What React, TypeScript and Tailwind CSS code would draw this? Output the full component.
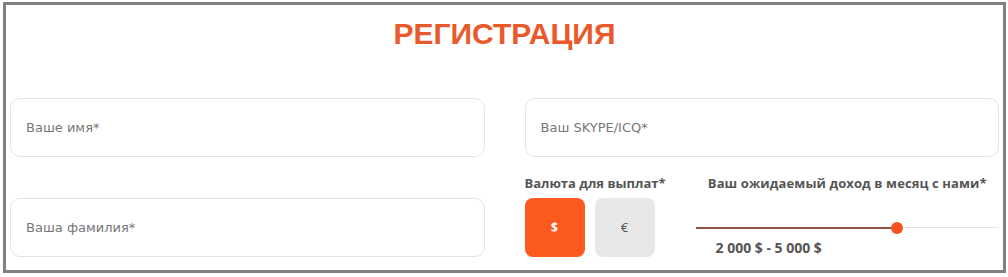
import React from 'react';

const inputCls =
  'w-full h-[59px] rounded-[10px] border border-[#e4e4e4] bg-white pl-[15px] text-[13px] text-[#555] outline-none placeholder:text-[#777] font-["DejaVu_Sans",sans-serif]';

const App = () => {
  const percent = 66.4;

  return (
    <div className="w-[1008px] h-[277px] bg-white pt-[2px] pl-[3px] font-['Open_Sans',sans-serif]">
      <div className="w-[1003px] h-[271px] border-[3px] border-[#808080] px-[4px]">
        <h1 className="pt-[12px] text-center text-[30px] leading-[34px] font-bold text-[#e9592b] font-['Liberation_Sans',Arial,sans-serif]">
          РЕГИСТРАЦИЯ
        </h1>

        <div className="mt-[47px] flex gap-x-[40px]">
          {/* левая колонка */}
          <div className="flex-1 flex flex-col gap-y-[41px]">
            <input className={inputCls} placeholder="Ваше имя*" />
            <input className={inputCls} placeholder="Ваша фамилия*" />
          </div>

          {/* правая колонка */}
          <div className="flex-1 flex flex-col">
            <input className={inputCls} placeholder="Ваш SKYPE/ICQ*" />

            <div className="mt-[17px] flex">
              <div className="w-[145px] shrink-0">
                <div className="text-[13px] leading-[18px] font-bold text-[#555] whitespace-nowrap">Валюта для выплат*</div>
                <div className="mt-[6px] flex gap-x-[10px]">
                  <button className="w-[60px] h-[59px] rounded-[8px] bg-[#fc5a1f] text-white text-[12px] font-bold">$</button>
                  <button className="w-[60px] h-[59px] rounded-[8px] bg-[#e8e8e8] text-[#555] text-[13px]">€</button>
                </div>
              </div>

              <div className="flex-1 ml-[26px] flex flex-col">
                <div className="text-center text-[13px] leading-[18px] font-bold text-[#555] whitespace-nowrap tracking-[0.1px]">
                  Ваш ожидаемый доход в месяц с нами*
                </div>
                <div className="relative mt-[30px] h-[12px]">
                  <div className="absolute left-0 right-0 top-[5px] h-[1px] bg-[#e2e2e2]" />
                  <div className="absolute left-0 top-[5px] h-[2px] bg-[#8d5243]" style={{ width: `${percent}%` }} />
                  <div
                    className="absolute top-0 w-[12px] h-[12px] -ml-[6px] rounded-full bg-[#f4511e]"
                    style={{ left: `${percent}%` }}
                  />
                </div>
                <div className="mt-[5px] pl-[20px] text-[14px] leading-[18px] font-bold text-[#555]">2 000 $ - 5 000 $</div>
              </div>
            </div>
          </div>
        </div>
      </div>
    </div>
  );
};

export default App;
